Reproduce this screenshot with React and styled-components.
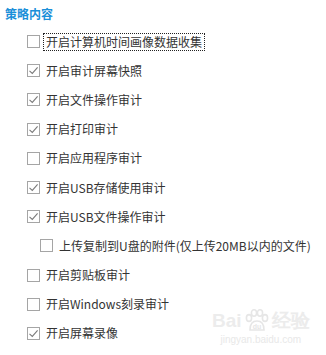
import React from "react";
import styled, { createGlobalStyle } from "styled-components";

const GlobalStyle = createGlobalStyle`
  html, body {
    margin: 0;
    padding: 0;
    background: #fff;
  }
  body {
    font-family: "Noto Sans CJK SC", "Microsoft YaHei", "Liberation Sans", sans-serif;
    color: #333;
  }
`;

const items = [
  { label: "开启计算机时间画像数据收集", checked: false, focused: true },
  { label: "开启审计屏幕快照", checked: true },
  { label: "开启文件操作审计", checked: true },
  { label: "开启打印审计", checked: true },
  { label: "开启应用程序审计", checked: false },
  { label: "开启USB存储使用审计", checked: true },
  { label: "开启USB文件操作审计", checked: true },
  { label: "上传复制到U盘的附件(仅上传20MB以内的文件)", checked: false, sub: true },
  { label: "开启剪贴板审计", checked: false },
  { label: "开启Windows刻录审计", checked: false },
  { label: "开启屏幕录像", checked: true },
];

function App() {
  return (
    <Page>
      <GlobalStyle />
      <Title>策略内容</Title>
      <List>
        {items.map((item) => (
          <Row key={item.label} $sub={item.sub}>
            <Box>
              {item.checked && (
                <svg width="11" height="11" viewBox="0 0 11 11">
                  <path d="M1.5 5.8 L4.3 8.4 L9.6 2.4" fill="none" stroke="#7a7a7a" strokeWidth="1.1" />
                </svg>
              )}
            </Box>
            <Label $focused={item.focused}>{item.label}</Label>
          </Row>
        ))}
      </List>
      <Watermark>
        <Brand>
          Bai
          <Paw>
            <svg width="26" height="24" viewBox="0 0 26 24">
              <g fill="none" stroke="#e6e6e6" strokeWidth="1.6">
                <ellipse cx="5" cy="9" rx="2.6" ry="3.4" />
                <ellipse cx="10" cy="4" rx="2.6" ry="3.2" />
                <ellipse cx="16" cy="4" rx="2.6" ry="3.2" />
                <ellipse cx="21" cy="9" rx="2.6" ry="3.4" />
                <path d="M6 21 C6 15 9 12 13 12 C17 12 20 15 20 21 Z" />
              </g>
              <text x="13" y="20" fontSize="7" textAnchor="middle" fill="#e6e6e6" fontFamily="Liberation Sans, sans-serif" fontWeight="bold">du</text>
            </svg>
          </Paw>
          经验
        </Brand>
        <Site>jingyan.baidu.com</Site>
      </Watermark>
    </Page>
  );
}

export default App;

const Page = styled.div`
  position: relative;
  width: 326px;
  height: 355px;
  overflow: hidden;
  background: #fff;
`;

const Title = styled.div`
  padding: 4px 0 3px 5px;
  line-height: 20px;
  font-size: 12px;
  font-weight: bold;
  color: #1b8fd9;
`;

const List = styled.div`
  display: flex;
  flex-direction: column;
  padding-left: 27px;
`;

const Row = styled.div`
  display: flex;
  align-items: center;
  height: 29.2px;
  padding-left: ${(p) => (p.$sub ? "13px" : "0")};
  font-size: 12px;
  color: #333;
`;

const Box = styled.span`
  box-sizing: border-box;
  width: 13px;
  height: 13px;
  border: 1px solid #a5a5a5;
  background: #fff;
  display: flex;
  align-items: center;
  justify-content: center;
  flex-shrink: 0;
`;

const Label = styled.span`
  margin-left: 3px;
  padding: 0 2px;
  line-height: 16px;
  white-space: nowrap;
  border: 1px dotted ${(p) => (p.$focused ? "#222" : "transparent")};
`;

const Watermark = styled.div`
  position: absolute;
  left: 212px;
  top: 309px;
  display: flex;
  flex-direction: column;
  align-items: center;
  pointer-events: none;
`;

const Brand = styled.div`
  display: flex;
  align-items: center;
  font-family: "Liberation Sans", sans-serif;
  font-size: 19px;
  font-weight: bold;
  color: #ececec;
  line-height: 22px;
`;

const Paw = styled.span`
  display: inline-flex;
  margin: 0 2px;
`;

const Site = styled.div`
  font-family: "Liberation Sans", sans-serif;
  font-size: 10px;
  color: #e8e8e8;
  line-height: 14px;
`;
